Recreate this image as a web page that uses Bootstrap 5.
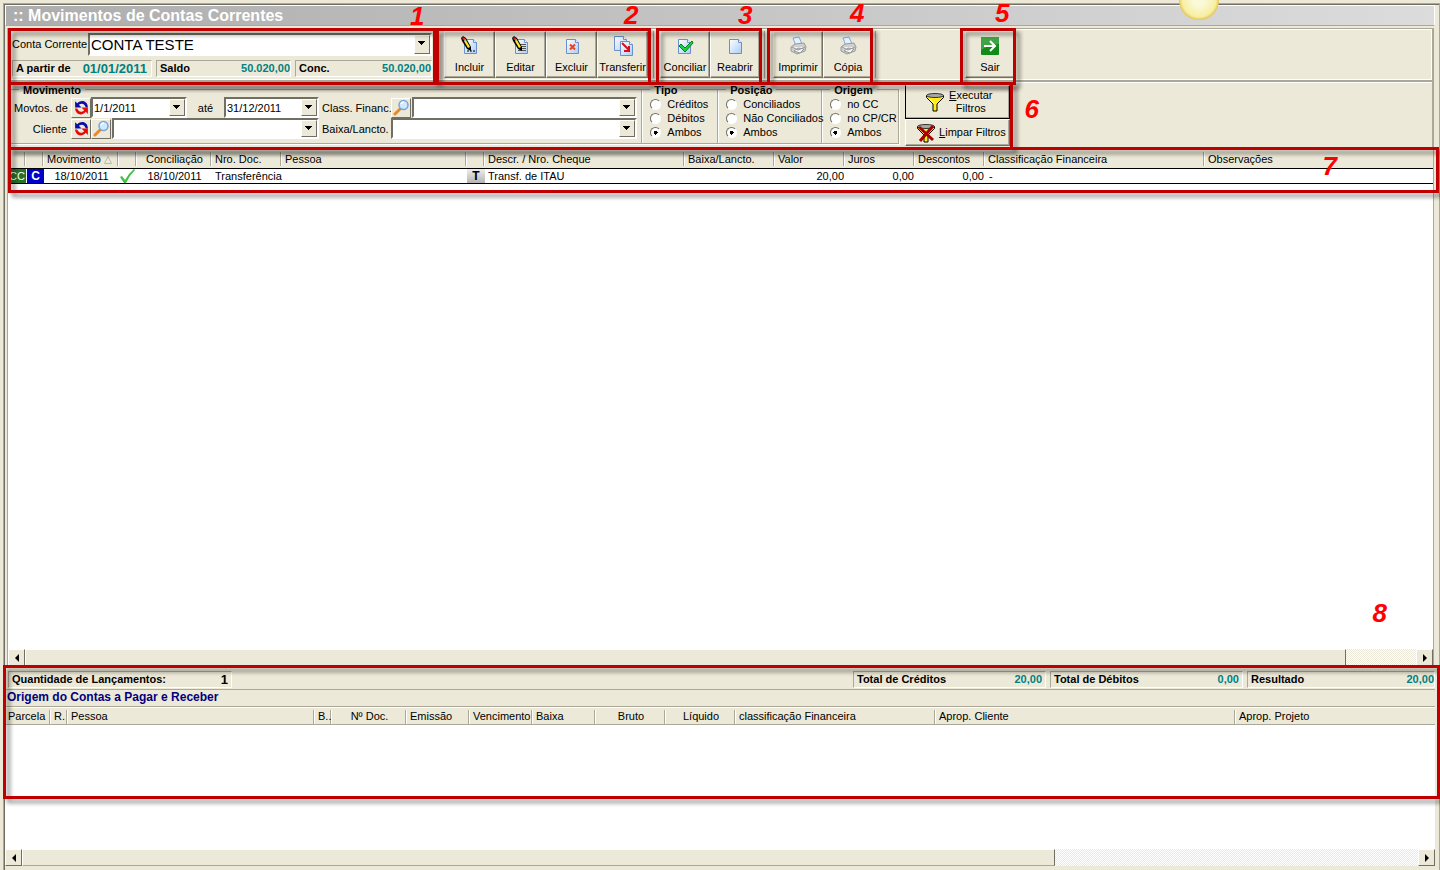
<!DOCTYPE html>
<html lang="pt-BR">
<head>
<meta charset="utf-8">
<meta name="viewport" content="width=device-width, initial-scale=1">
<title>Movimentos de Contas Correntes</title>
<link href="https://cdn.jsdelivr.net/npm/bootstrap@5.3.0/dist/css/bootstrap.min.css" rel="stylesheet">
<style>
:root{--face:#ece9d8;--edge:#aca899;--dark:#716f64;--mark:#c00000;--teal:#008080}
body{background:var(--face);font:11px/14px "Liberation Sans",Arial,sans-serif;color:#000}
.app-window{min-height:100vh;padding:3px 0 0 3px;border-bottom:1px solid var(--edge)}
.app-frame{border:1px solid var(--edge);border-bottom:0;box-shadow:inset 1px 1px 0 var(--dark);padding:1px 4px 4px 1px}
.title-strip{height:21px;border:1px solid #fff;border-bottom:1px solid var(--edge);background:linear-gradient(90deg,#adadad,#dcdcdc);color:#fff;font-size:16px;font-weight:700;line-height:20px;padding-left:7px}
.title-strip h1{font:inherit;margin:0}
.sun{position:absolute;top:-20px;right:221px;width:40px;height:40px;border-radius:50%;background:radial-gradient(circle,#fbf9d8 20%,#f6efa0 60%,#e6bd45 72%)}
.work{border-left:1px solid var(--edge);border-right:1px solid var(--edge);margin:2px 1px 0 2px}
.tool-panel{height:53px;border:1px solid var(--edge);border-left:0;box-shadow:inset 0 1px 0 #fff,inset -1px -1px 0 #fff}
.tool-group{position:relative;height:51px;padding-top:2px}
.outline{position:absolute;border:3px solid var(--mark);filter:drop-shadow(4px 4px 2px rgba(0,0,0,.45));pointer-events:none;z-index:3;inset:-1px 0 -5px 0}
.step{position:absolute;z-index:4;color:#f00;font-size:26px;line-height:24px;font-weight:700;font-style:italic;pointer-events:none}
.vsep{width:1px;background:var(--edge);margin:2px}
.sunk{border:1px solid;border-color:var(--edge) #fff #fff var(--edge);height:17px;line-height:15px;font-weight:700;padding:0 3px;display:flex;justify-content:space-between}
.account .sunk{padding-right:0}
.teal{color:var(--teal)}
.big-date{font-size:13px}
.account .big-date{padding-right:4px}
.tool-btn{width:51px;height:47px;border:1px solid;border-color:#fff var(--dark) var(--dark) #fff;box-shadow:inset -1px -1px 0 var(--edge);background:var(--face);padding:4px 0 0;display:flex;flex-direction:column;align-items:center;font-size:11px;line-height:14px;gap:4px;white-space:nowrap;color:#000}
.tool-btn svg{width:20px;height:20px;flex:none}
.w50 .tool-btn{width:50px}
.combo{position:relative;height:21px;border:2px solid;border-color:var(--dark) #fff #fff var(--dark);background:#fff}
.combo select{appearance:none;border:0;background:transparent;width:100%;height:17px;padding:0 18px 0 1px;font-size:11px;line-height:16px;color:#000;display:block;outline-offset:-1px}
.combo::after{content:"";position:absolute;right:0;top:0;bottom:0;width:16px;border:1px solid;border-color:#fff var(--dark) var(--dark) #fff;pointer-events:none;background:linear-gradient(#000,#000) 3px 5px/7px 1px no-repeat,linear-gradient(#000,#000) 4px 6px/5px 1px no-repeat,linear-gradient(#000,#000) 5px 7px/3px 1px no-repeat,linear-gradient(#000,#000) 6px 8px/1px 1px no-repeat,var(--face)}
.combo.tall{height:23px}.combo.tall select{height:19px;font-size:15px;line-height:18px}
.mini.lens+.combo{margin-left:1px}
.filters{height:69px;border:1px solid var(--edge);border-left:0;border-bottom:0;box-shadow:inset 0 1px 0 #fff}
.filter-zone{position:relative;width:1005px;height:68px;padding:7px 3px 0}
.group-box{position:relative;height:55px;border:1px solid var(--edge);border-left-width:0;box-shadow:1px 1px 0 #fff;padding:7px 0 0;margin:0}
.group-box:first-child{border-left-width:1px}
.group-box legend{position:absolute;top:-6px;left:8px;width:auto;float:none;padding:0 4px;margin:0;background:var(--face);font-size:11px;line-height:12px;font-weight:700}
.f-row{display:flex;align-items:center;height:21px}
.mini{width:20px;height:20px;padding:0;border:1px solid;border-color:#fff var(--dark) var(--dark) #fff;background:var(--face);display:flex;align-items:center;justify-content:center}
.mini svg{width:17px;height:17px}
.choice{display:flex;align-items:center;height:14px;padding-left:8px;gap:6px;white-space:nowrap}
.choice input{appearance:none;width:11px;height:11px;margin:0;border-radius:50%;border:1px solid;border-color:var(--dark) #fff #fff var(--dark);background:#fff;flex:none}
.choice input:checked{background:radial-gradient(circle,#000 0 2px,#fff 2px)}
.run-col{margin:-4px 0 0 6px;width:105px}
.run-btn{width:100%;height:34px;border:1px solid;border-color:#fff #000 #000 #000;box-shadow:inset -1px -1px 0 var(--edge);background:var(--face);padding:0;display:flex;align-items:center;font-size:11px;line-height:13px;color:#000}
.run-btn.low{height:27px;border-color:#fff var(--dark) var(--dark) #fff}
.run-btn svg{width:20px;height:20px;flex:none}
.grid-pane{position:relative;background:#fff;min-height:516px;height:calc(100vh - 354px);display:flex;flex-direction:column}
.data{table-layout:fixed;width:100%;border-collapse:separate;border-spacing:0}
.data th{height:18px;padding:0 3px;font-weight:400;background:var(--face);line-height:14px;white-space:nowrap;background-image:linear-gradient(var(--edge),var(--edge)),linear-gradient(#fff,#fff);background-size:1px 14px;background-position:right 1px top 2px,right 0 top 2px;background-repeat:no-repeat}
.data th:last-child{background-image:none}
.data td{height:16px;padding:0 3px;border-top:1px solid #000;border-bottom:1px solid #000;line-height:14px;white-space:nowrap}
.data td.num{text-align:right;padding:0 1px 0 0}
.data td.slim{padding:0}
.tag{display:block;height:14px;line-height:14px;text-align:center;font-weight:700;color:#fff}
.tag.cc{background:#267326;font-weight:400}.tag.cr{background:#0000c8;margin-left:1px;font-size:12px}.tag.tr{background:linear-gradient(#eee,#b4b4b4);color:#000;font-size:12px}
.slider{display:flex;height:17px;background:repeating-conic-gradient(var(--face) 0 25%,#fff 0 50%) 0 0/2px 2px}
.slider button{width:17px;padding:0;border:1px solid;border-color:#fff var(--dark) var(--dark) #fff;background:var(--face);display:flex;align-items:center;justify-content:center;flex:none}
.slider svg{width:8px;height:8px}
.rail{flex:1}
.thumb{height:100%;background:var(--face);border:1px solid;border-color:#fff var(--dark) var(--edge) #fff}
.lower{position:relative}
.totals{height:24px;padding:5px 0 0 3px;border-bottom:1px solid var(--edge);background:var(--face)}
.origin-title{height:17px;line-height:15px;font-size:12px;font-weight:700;color:#000080;margin:0;padding-left:2px;border-bottom:1px solid var(--edge)}
.origin th{border-top:1px solid #fff;border-bottom:1px solid var(--edge)}
.origin-body{height:124px;background:#fff}
</style>
</head>
<body>
<svg class="position-absolute" width="0" height="0" aria-hidden="true">
 <defs><linearGradient id="pg" x1="0" y1="0" x2="1" y2="1"><stop offset="0" stop-color="#fff"/><stop offset="1" stop-color="#a9cdf5"/></linearGradient></defs>
 <symbol id="page" viewBox="0 0 20 20"><path d="M4.500 3.500h9l3 3v11h-12z" fill="url(#pg)" stroke="#6a8fcf"/><path d="M13.500 3.500v3h3" fill="#fff" stroke="#6a8fcf"/></symbol>
 <symbol id="pencil" viewBox="0 0 20 20"><path d="M1 2l2-2 3 2 5 9v4l-4-2-5-8z" fill="#000"/><path d="M4 5l2-1 4 7-2 1z" fill="#ffe628"/><path d="M2 2l1-1 2 1v2H3z" fill="#e21818"/><path d="M5 3l1 1-2 1z" fill="#fff"/></symbol>
 <symbol id="printer" viewBox="0 0 20 20"><path d="M5 2l6-1 3 7-6 2z" fill="#e4f1ff" stroke="#7fa9e6"/><path d="M3 11l4-3 9-1 2 4-1 4-8 3-6-3z" fill="#cfcfcf" stroke="#999"/><path d="M4 11l6 3 7-3M6 15l4-3 6 1-4 4z" fill="#f4f4f4" stroke="#999"/></symbol>
 <symbol id="cycle" viewBox="0 0 16 16"><path d="M2 2v6h6L5.500 5.500C8 3.500 11 4 12 8h2C14 2 8 0 4 4z" fill="#0c0ca8"/><path d="M14 14V8H8l2.500 2.500C8 13 5 12 4 9H2c0 5 6 8 10 3z" fill="#e60b0b"/></symbol>
 <symbol id="lens" viewBox="0 0 17 17"><path d="M2 15l5-5" stroke="#e88a2a" stroke-width="3" stroke-linecap="round"/><circle cx="10.500" cy="6" r="4.500" fill="#cdeafe" stroke="#7ba3d8" stroke-width="1.500"/><path d="M8 5q1-2 3-2" stroke="#fff" stroke-width="1.500" fill="none"/></symbol>
 <symbol id="funnel" viewBox="0 0 20 20"><path d="M1.500 3.500v2L8 12v7h4v-7l6.500-6.500v-2z" fill="#ffec1a" stroke="#000"/><ellipse cx="10" cy="3.500" rx="8.500" ry="2" fill="#a8a8a8" stroke="#333"/><path d="M4.500 7L9 11.500" stroke="#fff"/></symbol>
 <symbol id="al" viewBox="0 0 8 8"><path d="M6 0v8L2 4z"/></symbol>
 <symbol id="ar" viewBox="0 0 8 8"><path d="M2 0v8l4-4z"/></symbol>
</svg>
<div class="app-window position-relative overflow-hidden">
 <div class="app-frame">
  <header class="title-strip"><h1>:: Movimentos de Contas Correntes</h1></header>
  <div class="sun"></div>
  <div class="work">
   <div class="tool-panel d-flex">
    <div class="tool-group account" style="width:428px">
     <div class="outline"></div><span class="step" style="top:-25px;left:402px">1</span>
     <div class="d-flex align-items-center ps-1">
      <label for="conta" class="text-nowrap flex-shrink-0" style="width:76px">Conta Corrente</label>
      <div class="combo tall flex-grow-1 me-1" style="margin-top:2px"><select id="conta"><option>CONTA TESTE</option></select></div>
     </div>
     <div class="d-flex gap-1 ps-1 pe-1 pt-1">
      <div class="sunk" style="width:140px"><span>A partir de</span><span class="teal big-date">01/01/2011</span></div>
      <div class="sunk" style="width:135px"><span>Saldo</span><span class="teal">50.020,00</span></div>
      <div class="sunk flex-grow-1"><span>Conc.</span><span class="teal">50.020,00</span></div>
     </div>
    </div>
    <div class="tool-group d-flex" style="padding-left:8px;padding-right:3px">
     <div class="outline"></div><span class="step" style="top:-26px;left:188px">2</span>
     <button class="tool-btn" type="button"><svg viewBox="0 0 20 20"><use href="#page"/><path d="M7 15h2m1 0h2m1 0h2" stroke="#000"/><use href="#pencil"/></svg>Incluir</button>
     <button class="tool-btn" type="button"><svg viewBox="0 0 20 20"><use href="#page"/><path d="M7 8.500h8M7 10.500h8M7 12.500h8M7 14.500h8" stroke="#555"/><use href="#pencil"/></svg>Editar</button>
     <button class="tool-btn" type="button"><svg viewBox="0 0 20 20"><use href="#page"/><path d="M8 8.500l5 5m0-5l-5 5" stroke="#f0401c" stroke-width="2"/></svg>Excluir</button>
     <button class="tool-btn" type="button"><svg viewBox="0 0 20 20"><use href="#page" x="-3" y="-3"/><use href="#page" x="3" y="2"/><path d="M9 7l7 7m0-4v5h-5" stroke="#d8101c" stroke-width="2" fill="none"/></svg>Transferir</button>
    </div>
    <div class="vsep"></div>
    <div class="tool-group w50 d-flex" style="padding-left:4px;padding-right:2px">
     <div class="outline"></div><span class="step" style="top:-26px;left:82px">3</span>
     <button class="tool-btn" type="button"><svg viewBox="0 0 20 20"><use href="#page" x="-1"/><path d="M4 10l2-2 4 4 7-7 1 2-8 9z" fill="#19d33c" stroke="#087b20"/></svg>Conciliar</button>
     <button class="tool-btn" type="button"><svg viewBox="0 0 20 20"><use href="#page"/></svg>Reabrir</button>
    </div>
    <div class="vsep"></div>
    <div class="tool-group w50 d-flex" style="padding-left:6px">
     <div class="outline"></div><span class="step" style="top:-28px;left:83px">4</span>
     <button class="tool-btn" type="button"><svg><use href="#printer"/></svg>Imprimir</button>
     <button class="tool-btn" type="button"><svg><use href="#printer"/></svg>Cópia</button>
    </div>
    <div class="vsep"></div>
    <div class="tool-group w50" style="margin-left:82px;padding-left:5px;padding-right:1px">
     <div class="outline"></div><span class="step" style="top:-28px;left:35px">5</span>
     <button class="tool-btn" type="button"><svg viewBox="0 0 20 20"><rect x="1" y="1" width="18" height="18" rx="1" fill="#128a17"/><path d="M1 1h18v7Q10 8 1 14z" fill="#3fa544"/><path d="M4 10h11M10 5l5 5-5 5" stroke="#fff" stroke-width="2" fill="none"/></svg>Sair</button>
    </div>
   </div>

   <form class="filters">
    <div class="filter-zone d-flex">
     <div class="outline" style="inset:0"></div><span class="step" style="top:15px;right:-26px">6</span>
     <fieldset class="group-box" style="width:632px">
      <legend>Movimento</legend>
      <div class="f-row">
       <label for="de" style="width:60px;padding-left:3px" class="text-nowrap">Movtos. de</label>
       <button class="mini" type="button" aria-label="Atualizar período"><svg><use href="#cycle"/></svg></button>
       <div class="combo" style="width:96px"><select id="de"><option>1/1/2011</option></select></div>
       <label for="ate" class="text-center" style="width:37px">até</label>
       <div class="combo" style="width:95px"><select id="ate"><option>31/12/2011</option></select></div>
       <label for="classe" class="text-nowrap" style="width:72px;padding-left:3px">Class. Financ.</label>
       <button class="mini lens" type="button" aria-label="Pesquisar classificação"><svg><use href="#lens"/></svg></button>
       <div class="combo flex-grow-1 me-1"><select id="classe"><option></option></select></div>
      </div>
      <div class="f-row">
       <label for="cliente" class="text-end pe-1" style="width:60px">Cliente</label>
       <button class="mini" type="button" aria-label="Atualizar cliente"><svg><use href="#cycle"/></svg></button>
       <button class="mini lens" type="button" aria-label="Pesquisar cliente"><svg><use href="#lens"/></svg></button>
       <div class="combo" style="width:207px"><select id="cliente"><option></option></select></div>
       <label for="baixa" class="text-nowrap" style="width:72px;padding-left:3px">Baixa/Lancto.</label>
       <div class="combo flex-grow-1 me-1"><select id="baixa"><option></option></select></div>
      </div>
     </fieldset>
     <fieldset class="group-box" style="width:76px"><legend>Tipo</legend>
      <label class="choice"><input type="radio" name="tipo">Créditos</label>
      <label class="choice"><input type="radio" name="tipo">Débitos</label>
      <label class="choice"><input type="radio" name="tipo" checked>Ambos</label>
     </fieldset>
     <fieldset class="group-box" style="width:104px"><legend>Posição</legend>
      <label class="choice"><input type="radio" name="pos">Conciliados</label>
      <label class="choice"><input type="radio" name="pos">Não Conciliados</label>
      <label class="choice"><input type="radio" name="pos" checked>Ambos</label>
     </fieldset>
     <fieldset class="group-box" style="width:77px"><legend>Origem</legend>
      <label class="choice"><input type="radio" name="orig">no CC</label>
      <label class="choice"><input type="radio" name="orig">no CP/CR</label>
      <label class="choice"><input type="radio" name="orig" checked>Ambos</label>
     </fieldset>
     <div class="run-col">
      <button class="run-btn" type="button" style="padding-left:19px;gap:4px"><svg><use href="#funnel"/></svg><span><u>E</u>xecutar<br>Filtros</span></button>
      <button class="run-btn low" type="button" style="padding-left:10px;gap:3px"><svg viewBox="0 0 20 20"><use href="#funnel"/><path d="M3 4l14 13M17 3L4 18" stroke="#a80000" stroke-width="3"/></svg><span><u>L</u>impar Filtros</span></button>
     </div>
    </div>
   </form>

   <div class="grid-pane">
    <div class="outline" style="inset:-3px -6px auto 0;height:46px"></div><span class="step" style="top:4px;right:96px">7</span>
    <span class="step" style="bottom:41px;right:46px">8</span>
    <table class="data">
     <colgroup><col style="width:18px"><col style="width:18px"><col style="width:75px"><col style="width:18px"><col style="width:75px"><col style="width:70px"><col style="width:185px"><col style="width:18px"><col style="width:200px"><col style="width:90px"><col style="width:70px"><col style="width:70px"><col style="width:70px"><col style="width:220px"><col></colgroup>
     <thead><tr><th></th><th></th><th>Movimento <svg width="8" height="8" viewBox="0 0 8 8"><path d="M.5 7.500L4 .5l3.500 7z" fill="none" stroke="#bdb9a8"/></svg></th><th></th><th class="text-center">Conciliação</th><th>Nro. Doc.</th><th>Pessoa</th><th></th><th>Descr. / Nro. Cheque</th><th>Baixa/Lancto.</th><th>Valor</th><th>Juros</th><th>Descontos</th><th>Classificação Financeira</th><th>Observações</th></tr></thead>
     <tbody><tr><td class="slim"><span class="tag cc">CC</span></td><td class="slim"><span class="tag cr">C</span></td><td class="text-center">18/10/2011</td><td class="slim"><svg class="d-block" width="17" height="14" viewBox="0 0 17 14"><path d="M1 8l2-1 3 4Q9 5 15 0l1 1Q10 7 7 14H5z" fill="#3fc13f"/></svg></td><td class="text-center">18/10/2011</td><td colspan="2">Transferência</td><td class="slim"><span class="tag tr">T</span></td><td>Transf. de ITAU</td><td></td><td class="num">20,00</td><td class="num">0,00</td><td class="num">0,00</td><td class="ps-1">-</td><td></td></tr></tbody>
    </table>
    <div class="slider mt-auto"><button type="button" aria-label="Rolar à esquerda"><svg><use href="#al"/></svg></button><div class="rail"><div class="thumb" style="width:95%"></div></div><button type="button" aria-label="Rolar à direita"><svg><use href="#ar"/></svg></button></div>
   </div>
  </div>

  <section class="lower">
   <div class="outline" style="inset:-1px -5px auto -2px;height:134px"></div>
   <div class="totals d-flex gap-1">
    <div class="sunk me-auto" style="width:224px"><span>Quantidade de Lançamentos:</span><span class="big-date">1</span></div>
    <div class="sunk" style="width:193px"><span>Total de Créditos</span><span class="teal">20,00</span></div>
    <div class="sunk" style="width:193px"><span>Total de Débitos</span><span class="teal">0,00</span></div>
    <div class="sunk pe-0" style="width:188px"><span>Resultado</span><span class="teal">20,00</span></div>
   </div>
   <h2 class="origin-title">Origem do Contas a Pagar e Receber</h2>
   <table class="data origin">
    <colgroup><col style="width:46px"><col style="width:17px"><col style="width:247px"><col style="width:17px"><col style="width:75px"><col style="width:63px"><col style="width:63px"><col style="width:63px"><col style="width:70px"><col style="width:70px"><col style="width:200px"><col style="width:300px"><col></colgroup>
    <thead><tr><th>Parcela</th><th>R.</th><th>Pessoa</th><th>B..</th><th class="text-center">Nº Doc.</th><th>Emissão</th><th>Vencimento</th><th>Baixa</th><th class="text-center">Bruto</th><th class="text-center">Líquido</th><th>classificação Financeira</th><th>Aprop. Cliente</th><th>Aprop. Projeto</th></tr></thead>
   </table>
   <div class="origin-body"></div>
   <div class="slider"><button type="button" aria-label="Rolar à esquerda"><svg><use href="#al"/></svg></button><div class="rail"><div class="thumb" style="width:74%"></div></div><button type="button" aria-label="Rolar à direita"><svg><use href="#ar"/></svg></button></div>
  </section>
 </div>
</div>
<script src="https://cdn.jsdelivr.net/npm/bootstrap@5.3.0/dist/js/bootstrap.bundle.min.js"></script>
</body>
</html>
